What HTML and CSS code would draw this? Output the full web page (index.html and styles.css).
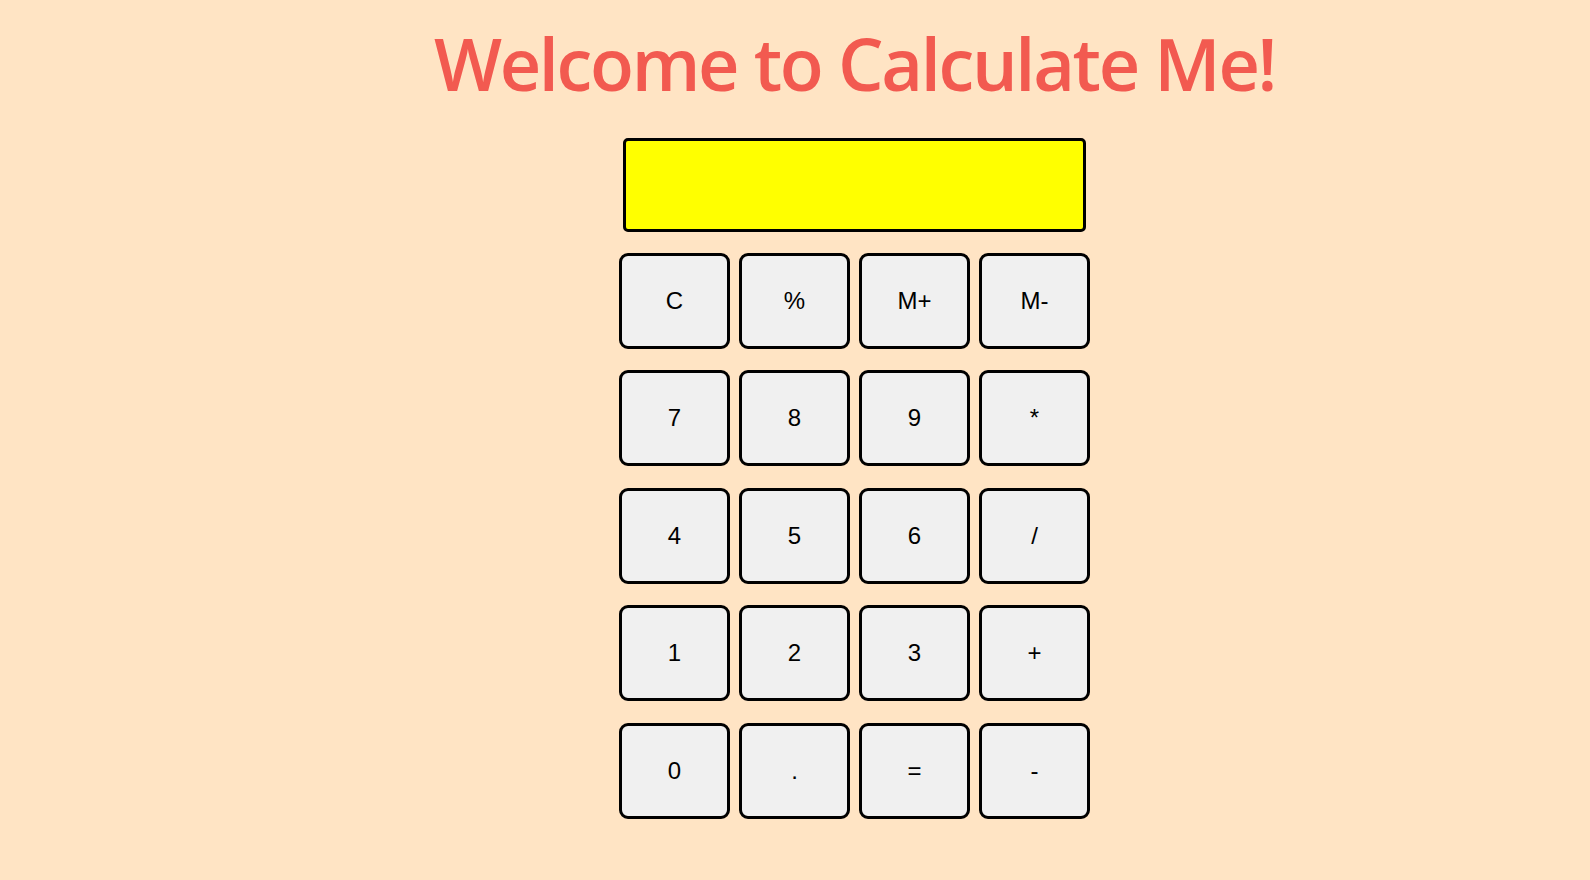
FILE: index.html
```html
<!DOCTYPE html>
<html lang="en">
<head>
<meta charset="utf-8">
<title>Calculate Me</title>
<link rel="stylesheet" href="styles.css">
</head>
<body>
<main class="page">
  <h1 class="title">Welcome to Calculate Me!</h1>
  <div class="calculator">
    <div class="display"></div>
    <div class="keys">
      <button class="key">C</button>
      <button class="key">%</button>
      <button class="key">M+</button>
      <button class="key">M-</button>
      <button class="key">7</button>
      <button class="key">8</button>
      <button class="key">9</button>
      <button class="key">*</button>
      <button class="key">4</button>
      <button class="key">5</button>
      <button class="key">6</button>
      <button class="key">/</button>
      <button class="key">1</button>
      <button class="key">2</button>
      <button class="key">3</button>
      <button class="key">+</button>
      <button class="key">0</button>
      <button class="key">.</button>
      <button class="key">=</button>
      <button class="key">-</button>
    </div>
  </div>
</main>
</body>
</html>
```

FILE: styles.css
```css
html, body {
  margin: 0;
  padding: 0;
  background: #ffe4c4;
}

.page {
  display: flex;
  flex-direction: column;
  align-items: center;
  padding-left: 119px;
  min-height: 880px;
  box-sizing: border-box;
}

.title {
  margin: 14px 0 0;
  font-family: "Open Sans", "Noto Sans", sans-serif;
  font-weight: 600;
  font-size: 72px;
  line-height: 98px;
  letter-spacing: -2.3px;
  color: #f25a50;
  white-space: nowrap;
}

.calculator {
  display: flex;
  flex-direction: column;
  align-items: center;
  margin-top: 26px;
}

.display {
  width: 463px;
  height: 94px;
  box-sizing: border-box;
  background: #ffff00;
  border: 3px solid #000;
  border-radius: 5px;
}

.keys {
  display: grid;
  grid-template-columns: repeat(4, 111px);
  grid-auto-rows: 96px;
  column-gap: 9px;
  row-gap: 21.6px;
  margin-top: 20.6px;
}

.key {
  box-sizing: border-box;
  background: #f0f0f0;
  border: 3px solid #000;
  border-radius: 9px;
  font-family: "Liberation Sans", Arial, sans-serif;
  font-size: 24px;
  color: #000;
  padding: 0;
}
```
